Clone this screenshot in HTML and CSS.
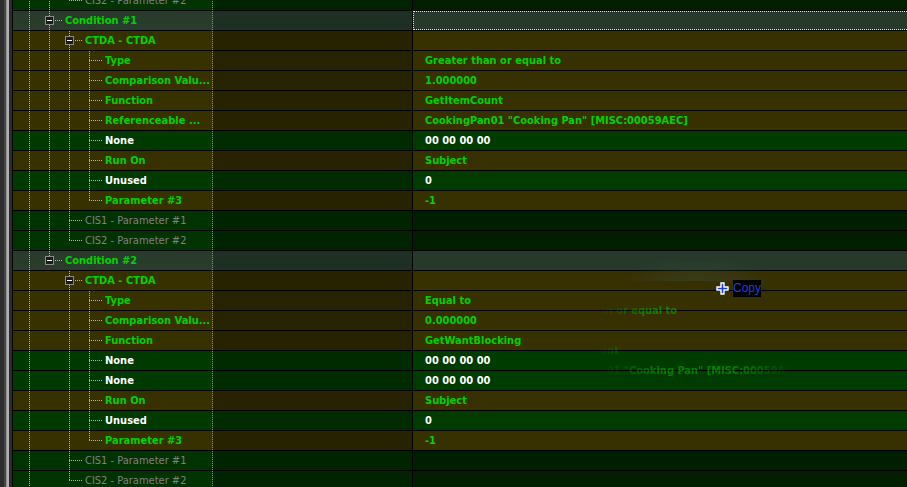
FILE: index.html
```html
<!DOCTYPE html>
<html>
<head>
<meta charset="utf-8">
<title>Conditions</title>
<link rel="stylesheet" href="styles.css">
</head>
<body>
<div class="app">
  <div class="gutter"></div>
  <div class="tree">
    <div class="row cis">
      <div class="name"><span class="g v"></span><span class="g v"></span><span class="c ell"></span><span class="lbl dim">CIS2 - Parameter #2</span></div>
      <div class="mid"></div><div class="val"></div>
    </div>
    <div class="row sel focus">
      <div class="name"><span class="g v"></span><span class="c tee"><span class="box"></span></span><span class="lbl">Condition #1</span></div>
      <div class="mid"></div><div class="val"></div>
    </div>
    <div class="row olive">
      <div class="name"><span class="g v"></span><span class="g v"></span><span class="c tee"><span class="box"></span></span><span class="lbl">CTDA - CTDA</span></div>
      <div class="mid"></div><div class="val"></div>
    </div>
    <div class="row olive">
      <div class="name"><span class="g v"></span><span class="g v"></span><span class="g v"></span><span class="c tee"></span><span class="lbl">Type</span></div>
      <div class="mid"></div><div class="val">Greater than or equal to</div>
    </div>
    <div class="row olive">
      <div class="name"><span class="g v"></span><span class="g v"></span><span class="g v"></span><span class="c tee"></span><span class="lbl">Comparison Valu...</span></div>
      <div class="mid"></div><div class="val">1.000000</div>
    </div>
    <div class="row olive">
      <div class="name"><span class="g v"></span><span class="g v"></span><span class="g v"></span><span class="c tee"></span><span class="lbl">Function</span></div>
      <div class="mid"></div><div class="val">GetItemCount</div>
    </div>
    <div class="row olive">
      <div class="name"><span class="g v"></span><span class="g v"></span><span class="g v"></span><span class="c tee"></span><span class="lbl">Referenceable ...</span></div>
      <div class="mid"></div><div class="val">CookingPan01 "Cooking Pan" [MISC:00059AEC]</div>
    </div>
    <div class="row green">
      <div class="name"><span class="g v"></span><span class="g v"></span><span class="g v"></span><span class="c tee"></span><span class="lbl w">None</span></div>
      <div class="mid"></div><div class="val w">00 00 00 00</div>
    </div>
    <div class="row olive">
      <div class="name"><span class="g v"></span><span class="g v"></span><span class="g v"></span><span class="c tee"></span><span class="lbl">Run On</span></div>
      <div class="mid"></div><div class="val">Subject</div>
    </div>
    <div class="row green">
      <div class="name"><span class="g v"></span><span class="g v"></span><span class="g v"></span><span class="c tee"></span><span class="lbl w">Unused</span></div>
      <div class="mid"></div><div class="val w">0</div>
    </div>
    <div class="row olive">
      <div class="name"><span class="g v"></span><span class="g v"></span><span class="g v"></span><span class="c ell"></span><span class="lbl">Parameter #3</span></div>
      <div class="mid"></div><div class="val">-1</div>
    </div>
    <div class="row cis">
      <div class="name"><span class="g v"></span><span class="g v"></span><span class="c tee"></span><span class="lbl dim">CIS1 - Parameter #1</span></div>
      <div class="mid"></div><div class="val"></div>
    </div>
    <div class="row cis">
      <div class="name"><span class="g v"></span><span class="g v"></span><span class="c ell"></span><span class="lbl dim">CIS2 - Parameter #2</span></div>
      <div class="mid"></div><div class="val"></div>
    </div>
    <div class="row sel">
      <div class="name"><span class="g v"></span><span class="c ell"><span class="box"></span></span><span class="lbl">Condition #2</span></div>
      <div class="mid"></div><div class="val"></div>
    </div>
    <div class="row olive">
      <div class="name"><span class="g v"></span><span class="g"></span><span class="c tee"><span class="box"></span></span><span class="lbl">CTDA - CTDA</span></div>
      <div class="mid"></div><div class="val"></div>
    </div>
    <div class="row olive">
      <div class="name"><span class="g v"></span><span class="g"></span><span class="g v"></span><span class="c tee"></span><span class="lbl">Type</span></div>
      <div class="mid"></div><div class="val">Equal to</div>
    </div>
    <div class="row olive">
      <div class="name"><span class="g v"></span><span class="g"></span><span class="g v"></span><span class="c tee"></span><span class="lbl">Comparison Valu...</span></div>
      <div class="mid"></div><div class="val">0.000000</div>
    </div>
    <div class="row olive">
      <div class="name"><span class="g v"></span><span class="g"></span><span class="g v"></span><span class="c tee"></span><span class="lbl">Function</span></div>
      <div class="mid"></div><div class="val">GetWantBlocking</div>
    </div>
    <div class="row green">
      <div class="name"><span class="g v"></span><span class="g"></span><span class="g v"></span><span class="c tee"></span><span class="lbl w">None</span></div>
      <div class="mid"></div><div class="val w">00 00 00 00</div>
    </div>
    <div class="row green">
      <div class="name"><span class="g v"></span><span class="g"></span><span class="g v"></span><span class="c tee"></span><span class="lbl w">None</span></div>
      <div class="mid"></div><div class="val w">00 00 00 00</div>
    </div>
    <div class="row olive">
      <div class="name"><span class="g v"></span><span class="g"></span><span class="g v"></span><span class="c tee"></span><span class="lbl">Run On</span></div>
      <div class="mid"></div><div class="val">Subject</div>
    </div>
    <div class="row green">
      <div class="name"><span class="g v"></span><span class="g"></span><span class="g v"></span><span class="c tee"></span><span class="lbl w">Unused</span></div>
      <div class="mid"></div><div class="val w">0</div>
    </div>
    <div class="row olive">
      <div class="name"><span class="g v"></span><span class="g"></span><span class="g v"></span><span class="c ell"></span><span class="lbl">Parameter #3</span></div>
      <div class="mid"></div><div class="val">-1</div>
    </div>
    <div class="row cis">
      <div class="name"><span class="g v"></span><span class="g"></span><span class="c tee"></span><span class="lbl dim">CIS1 - Parameter #1</span></div>
      <div class="mid"></div><div class="val"></div>
    </div>
    <div class="row cis">
      <div class="name"><span class="g v"></span><span class="g"></span><span class="c ell"></span><span class="lbl dim">CIS2 - Parameter #2</span></div>
      <div class="mid"></div><div class="val"></div>
    </div>
  </div>

  <div class="ghost">
    <div class="grow gsel"></div>
    <div class="grow"></div>
    <div class="grow">Greater than or equal to</div>
    <div class="grow">1.000000</div>
    <div class="grow">GetItemCount</div>
    <div class="grow">CookingPan01 "Cooking Pan" [MISC:00059AEC]</div>
    <div class="grow w">00 00 00 00</div>
    <div class="grow">Subject</div>
    <div class="grow w">0</div>
    <div class="grow">-1</div>
  </div>

  <div class="drag">
    <svg class="cursor" width="14" height="14" viewBox="0 0 14 14"><path d="M5 1H8V5H12V8H8V12H5V8H1V5H5Z" fill="#1c3fe0" stroke="#fff" stroke-width="1.4"/></svg>
    <span class="copy">Copy</span>
  </div>
</div>
</body>
</html>
```

FILE: styles.css
```css
html, body {
  margin: 0;
  padding: 0;
  background: #000;
  overflow: hidden;
}
body {
  font-family: "DejaVu Sans Condensed", "DejaVu Sans", sans-serif;
  font-stretch: condensed;
  font-size: 11px;
}
.app {
  position: relative;
  display: flex;
  height: 487px;
  overflow: hidden;
}
.gutter {
  width: 13px;
  flex: none;
  background: linear-gradient(to right, #2d2d2d 0 4px, #484848 4px 6px, #8e8e8e 6px 7px, #b0b0b0 7px 9px, #2c2c2c 9px 12px, #050505 12px 13px);
}
.tree {
  flex: 1;
  min-width: 0;
  margin-top: -9px;
}
.row {
  display: flex;
  height: 20px;
  box-sizing: border-box;
  border-bottom: 1px solid #000;
}
.name {
  width: 200px;
  flex: none;
  box-sizing: border-box;
  padding-left: 6px;
  border-right: 1px dotted #8c8c8c;
  display: flex;
  overflow: hidden;
}
.mid {
  width: 200px;
  flex: none;
  box-sizing: border-box;
  border-right: 1px solid #000;
}
.val {
  flex: 1;
  min-width: 0;
  box-sizing: border-box;
  padding-left: 12px;
  line-height: 19px;
  white-space: nowrap;
  overflow: hidden;
  color: #00d200;
  font-weight: bold;
}
.g { width: 20px; flex: none; }
.c { width: 26px; flex: none; }
.v {
  background: repeating-linear-gradient(#b4b4b4 0 1px, transparent 1px 2px) 10px 0 / 1px 100% no-repeat;
}
.tee {
  background:
    repeating-linear-gradient(to right, #b4b4b4 0 1px, transparent 1px 2px) 10px 9px / 13px 1px no-repeat,
    repeating-linear-gradient(#b4b4b4 0 1px, transparent 1px 2px) 10px 0 / 1px 100% no-repeat;
}
.ell {
  background:
    repeating-linear-gradient(to right, #b4b4b4 0 1px, transparent 1px 2px) 10px 9px / 13px 1px no-repeat,
    repeating-linear-gradient(#b4b4b4 0 1px, transparent 1px 2px) 10px 0 / 1px 10px no-repeat;
}
.box {
  display: block;
  width: 9px;
  height: 9px;
  box-sizing: border-box;
  margin: 5px 0 0 6px;
  border: 1px solid #8a8a8a;
  background: linear-gradient(#fff, #fff) 1px 3px / 5px 1px no-repeat, #1c1c1c;
}
.lbl {
  flex: 1;
  min-width: 0;
  line-height: 19px;
  white-space: nowrap;
  overflow: hidden;
  color: #00d200;
  font-weight: bold;
}
.w { color: #fff; }
.dim { color: #808080; font-weight: normal; }

.olive .name { background: #373100; }
.olive .mid { background: #272200; }
.olive .val { background: #373000; }
.green .name { background: #003a00; }
.green .mid { background: #002a00; }
.green .val { background: #003c00; }
.cis .name { background: #003300; }
.cis .mid { background: #002300; }
.cis .val { background: #001f00; }
.sel .name { background: #293c2b; }
.sel .mid { background: #1e2f24; }
.sel .val { background: #27392a; }
.focus .val {
  border: 1px dotted #e0e0e0;
  border-right: 0;
}

.ghost {
  position: absolute;
  left: 529px;
  top: 261px;
  width: 378px;
  opacity: 0.5;
  pointer-events: none;
  -webkit-mask-image: radial-gradient(ellipse 102px 85px at 168px 74px, #000 55%, transparent 100%);
  mask-image: radial-gradient(ellipse 102px 85px at 168px 74px, #000 55%, transparent 100%);
}
.grow {
  height: 20px;
  line-height: 19px;
  padding-left: 12px;
  white-space: nowrap;
  color: #00c800;
  font-weight: bold;
}
.grow.w { color: #fff; }
.gsel { background: #3c4a3e; }

.drag {
  position: absolute;
  left: 716px;
  top: 280px;
  display: flex;
  align-items: flex-start;
  gap: 3px;
}
.cursor {
  display: block;
  margin-top: 2px;
}
.copy {
  display: block;
  height: 17px;
  line-height: 17px;
  background: #000;
  color: #1f40dc;
  font-family: "Liberation Sans", Arial, sans-serif;
  font-stretch: normal;
  font-size: 12px;
}
```
